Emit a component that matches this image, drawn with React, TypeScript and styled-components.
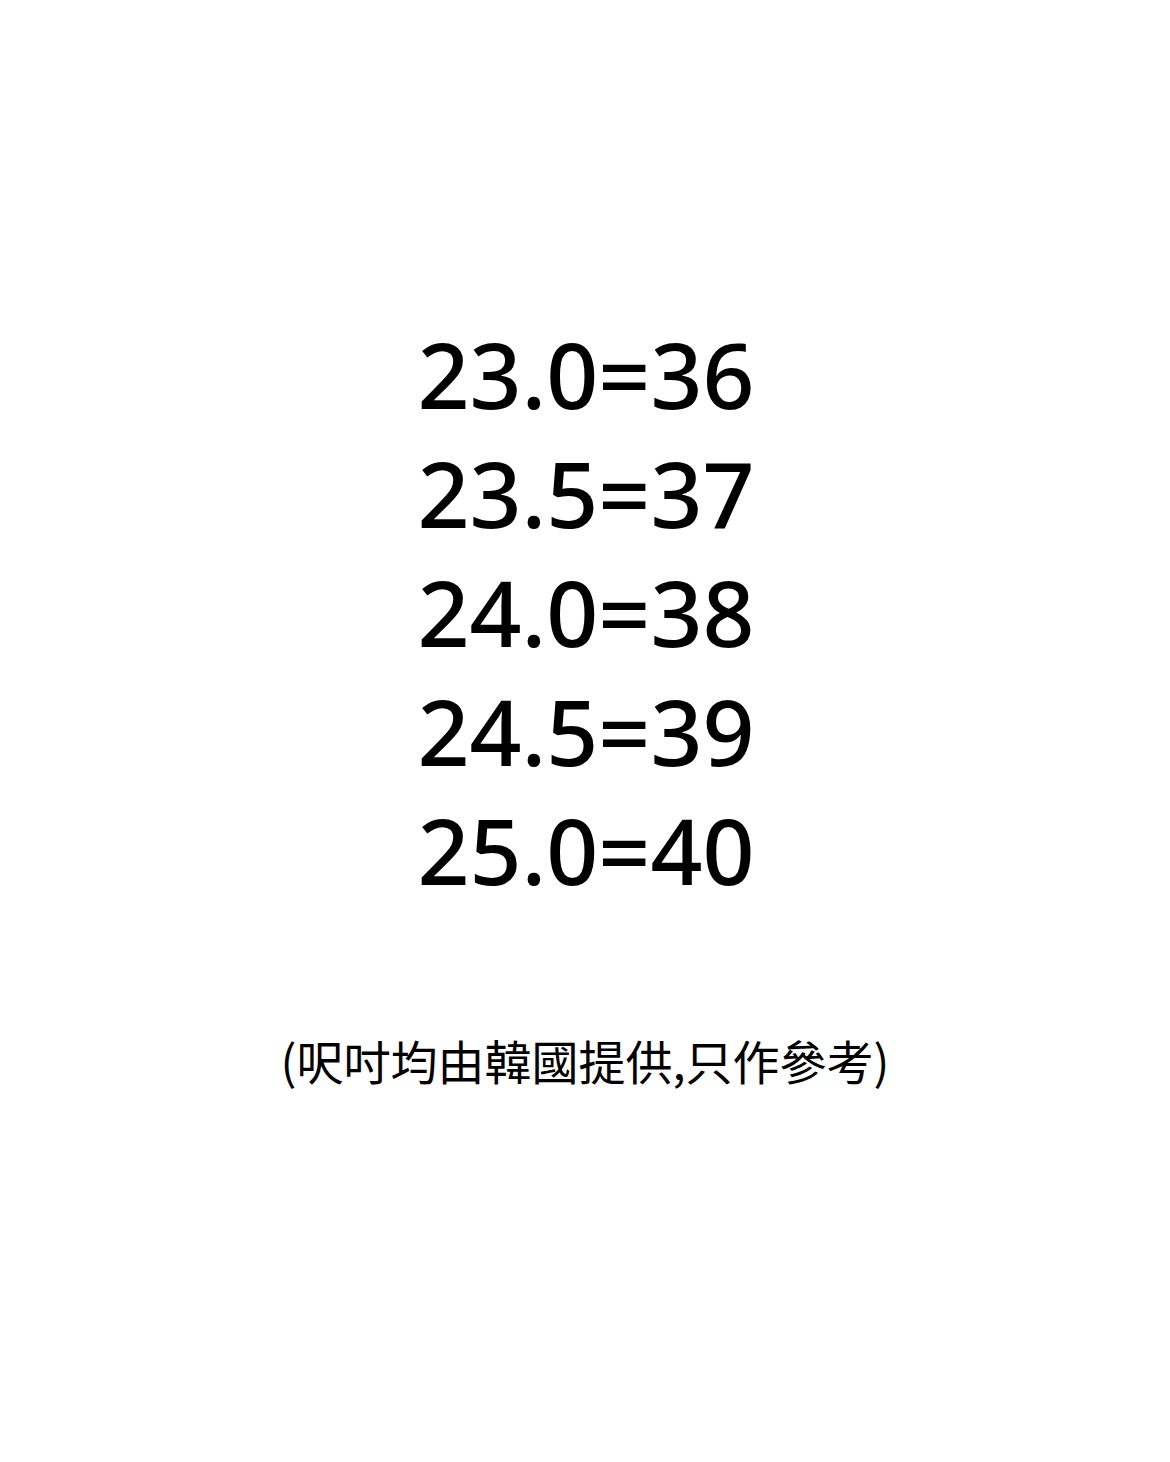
import React from 'react';
import styled, { createGlobalStyle } from 'styled-components';

const GlobalStyle = createGlobalStyle`
  html, body {
    margin: 0;
    padding: 0;
    background: #ffffff;
  }
`;

const Page = styled.div`
  width: 1170px;
  height: 1462px;
  background: #ffffff;
  display: flex;
  flex-direction: column;
  align-items: center;
  padding-top: 315px;
  box-sizing: border-box;
`;

const SizeList = styled.div`
  display: flex;
  flex-direction: column;
  align-items: center;
`;

const SizeRow = styled.div`
  font-family: 'Noto Sans', 'Open Sans', sans-serif;
  font-size: 91px;
  font-weight: 500;
  line-height: 119px;
  color: #000000;
  white-space: nowrap;
  padding-left: 2px;
`;

const Note = styled.div`
  margin-top: 120px;
  font-family: 'Noto Sans CJK TC', 'Noto Sans CJK SC', sans-serif;
  font-size: 47px;
  line-height: 60px;
  color: #000000;
  white-space: nowrap;
`;

const sizes = ['23.0=36', '23.5=37', '24.0=38', '24.5=39', '25.0=40'];

const App: React.FC = () => {
  return (
    <>
      <GlobalStyle />
      <Page>
        <SizeList>
          {sizes.map((s) => (
            <SizeRow key={s}>{s}</SizeRow>
          ))}
        </SizeList>
        <Note>(呎吋均由韓國提供,只作參考)</Note>
      </Page>
    </>
  );
};

export default App;
